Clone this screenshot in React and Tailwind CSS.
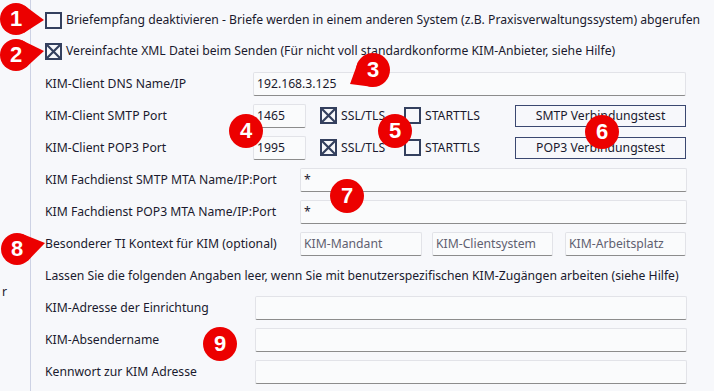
import React from "react";

const Checkbox = ({ checked }) => (
  <div className="w-[17px] h-[17px] border-2 border-[#34405e] shrink-0 flex items-center justify-center">
    {checked && (
      <svg width="13" height="13" viewBox="0 0 13 13">
        <path d="M0 0 L13 13 M13 0 L0 13" stroke="#34405e" strokeWidth="2.2" />
      </svg>
    )}
  </div>
);

const Field = ({ className, value, placeholder }) => (
  <div className={"h-[24px] bg-[#fafbfc] border border-[#e2e3e8] border-b-[#8c8c8c] rounded-[2px] flex items-center px-[3px] shrink-0 " + className}>
    {value ? (
      <span className="text-[#1a1a2e]">{value}</span>
    ) : (
      <span className="text-[#5f6070]">{placeholder}</span>
    )}
  </div>
);

// red numbered marker, optional tail pointing at (tx, ty)
const Badge = ({ n, x, y, r = 17, tail }) => {
  let poly = null;
  let minX = x - r, minY = y - r, maxX = x + r, maxY = y + r;
  if (tail) {
    const [tx, ty] = tail;
    const a = Math.atan2(ty - y, tx - x);
    const p1 = [x + r * Math.cos(a + 1.05), y + r * Math.sin(a + 1.05)];
    const p2 = [x + r * Math.cos(a - 1.05), y + r * Math.sin(a - 1.05)];
    poly = [p1, [tx, ty], p2];
    minX = Math.min(minX, tx); maxX = Math.max(maxX, tx);
    minY = Math.min(minY, ty); maxY = Math.max(maxY, ty);
  }
  const w = maxX - minX, h = maxY - minY;
  return (
    <div className="absolute" style={{ left: minX, top: minY, width: w, height: h }}>
      <svg width={w} height={h} viewBox={`${minX} ${minY} ${w} ${h}`} className="absolute inset-0">
        {poly && <polygon points={poly.map((p) => p.join(",")).join(" ")} fill="#ec0000" />}
        <circle cx={x} cy={y} r={r} fill="#ec0000" />
      </svg>
      <span
        className="absolute text-white font-bold text-[22px] leading-none font-['Liberation_Sans',Arial,sans-serif]"
        style={{ left: x - minX, top: y - minY, transform: "translate(-50%,-52%)" }}
      >
        {n}
      </span>
    </div>
  );
};

export default function App() {
  return (
    <div className="w-[714px] h-[391px] bg-[#f7f8fb] flex relative overflow-hidden font-['Noto_Sans',sans-serif] text-[12.2px] text-[#1a1a2e]">
      <div className="w-[31px] border-r border-[#cdd2e4] pt-[283px] pl-[2px] shrink-0">r</div>

      <div className="flex-1 flex flex-col pl-[14px] pt-[4px]">
        <div className="h-[32px] flex items-center gap-[4px]">
          <Checkbox />
          <span>Briefempfang deaktivieren - Briefe werden in einem anderen System (z.B. Praxisverwaltungssystem) abgerufen</span>
        </div>
        <div className="h-[31px] flex items-center gap-[4px]">
          <Checkbox checked />
          <span>Vereinfachte XML Datei beim Senden (Für nicht voll standardkonforme KIM-Anbieter, siehe Hilfe)</span>
        </div>

        <div className="h-[32px] mt-[1px] flex items-center">
          <span className="w-[208px] shrink-0">KIM-Client DNS Name/IP</span>
          <Field className="w-[433px]" value="192.168.3.125" />
        </div>

        <div className="h-[32px] flex items-center">
          <span className="w-[208px] shrink-0">KIM-Client SMTP Port</span>
          <Field className="w-[53px]" value="1465" />
          <div className="w-[84px] ml-[14px] flex items-center gap-[4px]">
            <Checkbox checked />
            <span>SSL/TLS</span>
          </div>
          <div className="w-[111px] flex items-center gap-[4px]">
            <Checkbox />
            <span>STARTTLS</span>
          </div>
          <div className="w-[171px] h-[22px] border border-[#3b4870] flex items-center justify-center">SMTP Verbindungstest</div>
        </div>

        <div className="h-[32px] flex items-center">
          <span className="w-[208px] shrink-0">KIM-Client POP3 Port</span>
          <Field className="w-[53px]" value="1995" />
          <div className="w-[84px] ml-[14px] flex items-center gap-[4px]">
            <Checkbox checked />
            <span>SSL/TLS</span>
          </div>
          <div className="w-[111px] flex items-center gap-[4px]">
            <Checkbox />
            <span>STARTTLS</span>
          </div>
          <div className="w-[171px] h-[22px] border border-[#3b4870] flex items-center justify-center">POP3 Verbindungstest</div>
        </div>

        <div className="h-[32px] flex items-center">
          <span className="w-[255px] shrink-0">KIM Fachdienst SMTP MTA Name/IP:Port</span>
          <Field className="w-[387px]" value="*" />
        </div>
        <div className="h-[32px] flex items-center">
          <span className="w-[255px] shrink-0">KIM Fachdienst POP3 MTA Name/IP:Port</span>
          <Field className="w-[387px]" value="*" />
        </div>
        <div className="h-[32px] flex items-center">
          <span className="w-[255px] shrink-0">Besonderer TI Kontext für KIM (optional)</span>
          <Field className="w-[122px]" placeholder="KIM-Mandant" />
          <Field className="w-[121px] ml-[10px]" placeholder="KIM-Clientsystem" />
          <Field className="w-[121px] ml-[12px]" placeholder="KIM-Arbeitsplatz" />
        </div>

        <div className="h-[32px] flex items-center">
          <span>Lassen Sie die folgenden Angaben leer, wenn Sie mit benutzerspezifischen KIM-Zugängen arbeiten (siehe Hilfe)</span>
        </div>

        <div className="h-[32px] flex items-center">
          <span className="w-[210px] shrink-0">KIM-Adresse der Einrichtung</span>
          <Field className="w-[432px]" />
        </div>
        <div className="h-[32px] flex items-center">
          <span className="w-[210px] shrink-0">KIM-Absendername</span>
          <Field className="w-[432px]" />
        </div>
        <div className="h-[32px] flex items-center">
          <span className="w-[210px] shrink-0">Kennwort zur KIM Adresse</span>
          <Field className="w-[432px]" />
        </div>
      </div>

      <Badge n="1" x={16} y={19} r={16} tail={[44, 20]} />
      <Badge n="2" x={16} y={55} r={16} tail={[44, 51]} />
      <Badge n="3" x={373} y={70} r={17} tail={[350, 84]} />
      <Badge n="4" x={246} y={131} />
      <Badge n="5" x={395} y={131} />
      <Badge n="6" x={602} y={132} />
      <Badge n="7" x={347} y={196} />
      <Badge n="8" x={17} y={249} r={16} tail={[45, 243]} />
      <Badge n="9" x={220} y={344} />
    </div>
  );
}
